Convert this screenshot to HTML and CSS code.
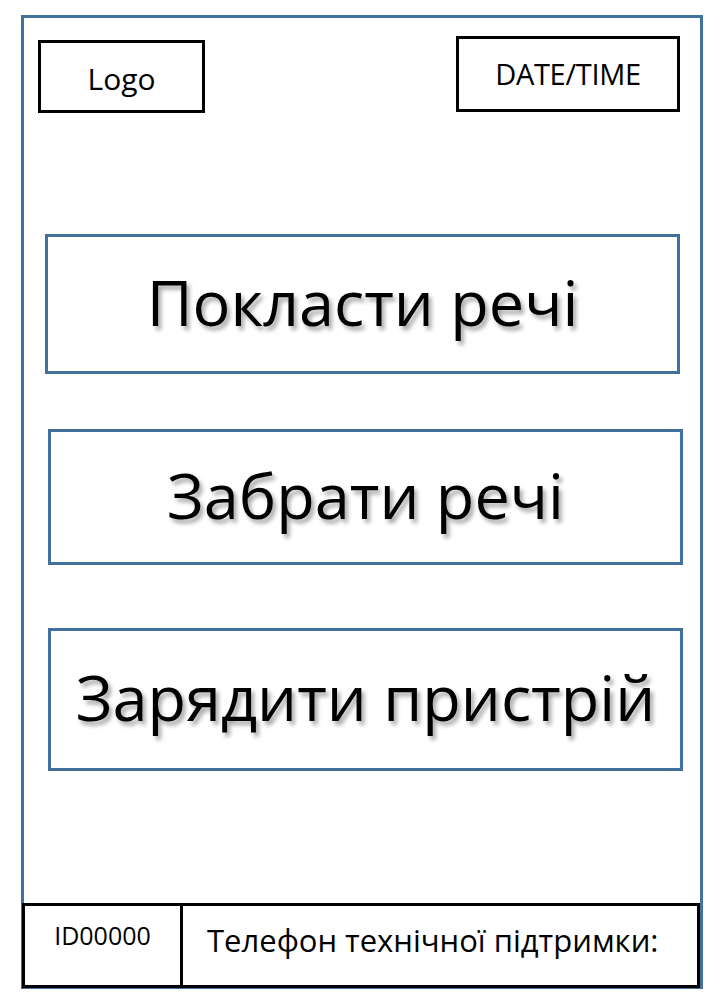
FILE: index.html
```html
<!DOCTYPE html>
<html lang="uk">
<head>
  <meta charset="UTF-8">
  <title>Термінал</title>
  <link rel="stylesheet" href="styles.css">
</head>
<body>
  <div class="screen">
    <div class="top">
      <div class="logo">Logo</div>
      <div class="clock">DATE/TIME</div>
    </div>

    <div class="actions">
      <button class="action put">Покласти речі</button>
      <button class="action take">Забрати речі</button>
      <button class="action charge">Зарядити пристрій</button>
    </div>

    <div class="bottom">
      <div class="term-id">ID00000</div>
      <div class="support">Телефон технічної підтримки:</div>
    </div>
  </div>
</body>
</html>
```

FILE: styles.css
```css
body { margin: 0; background: #fff; font-family: "Open Sans", "Noto Sans", sans-serif; color: #000; }
.screen { box-sizing: border-box; width: 682px; height: 974px; margin: 15px 0 0 21px; border: 3px solid #41719c; display: flex; flex-direction: column; }

.top { display: flex; justify-content: space-between; align-items: flex-start; padding: 18px 20px 0 14px; }
.logo, .clock { box-sizing: border-box; border: 3px solid #000; display: flex; align-items: center; justify-content: center; }
.logo { width: 167px; height: 73px; margin-top: 4px; font-size: 30px; padding-top: 4px; }
.clock { width: 224px; height: 76px; font-size: 29px; letter-spacing: -0.3px; padding-bottom: 2px; }

.actions { display: flex; flex-direction: column; align-items: flex-start; padding-left: 24px; }
.action { box-sizing: border-box; width: 635px; border: 3px solid #41719c; background: #fff; font-family: inherit; font-size: 63px; color: #000; text-shadow: 3px 4px 4px rgba(0,0,0,0.35); padding: 0 0 6px; }
.put { height: 140px; margin-top: 121px; margin-left: -3px; }
.take { height: 136px; margin-top: 55px; }
.charge { height: 143px; margin-top: 63px; }

.bottom { margin-top: auto; margin-left: -2px; display: flex; height: 85px; margin-bottom: -2px; }
.term-id, .support { box-sizing: border-box; border: 3px solid #000; height: 100%; }
.term-id { width: 161px; font-size: 25px; text-align: center; padding-top: 12px; }
.support { flex: 1; border-left: 0; font-size: 31px; padding: 13px 0 0 24px; }
```
